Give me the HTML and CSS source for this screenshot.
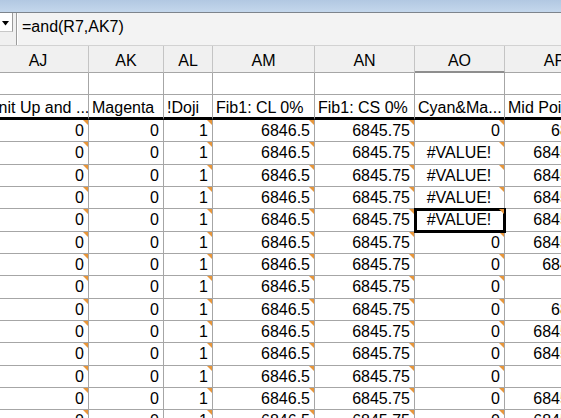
FILE: index.html
```html
<!DOCTYPE html>
<html lang="en">
<head>
    <meta charset="UTF-8">
    <title>Sheet</title>
    <link rel="stylesheet" href="styles.css">
</head>
<body>
    <div class="titlebar"></div>
    <div class="formula-bar">
        <div class="namebox">
            <svg width="8" height="5" viewBox="0 0 8 5"><path d="M0 0H7L3.5 4.5Z" fill="#000"/></svg>
        </div>
        <div class="formula">=and(R7,AK7)</div>
    </div>

    <div class="sheet">
        <div class="grid" id="grid">
            <div class="row head">
                <div class="cell">AJ</div>
                <div class="cell">AK</div>
                <div class="cell">AL</div>
                <div class="cell">AM</div>
                <div class="cell">AN</div>
                <div class="cell sel-col">AO</div>
                <div class="cell">AP</div>
            </div>
            <div class="row blank">
                <div class="cell"></div><div class="cell"></div><div class="cell"></div><div class="cell"></div>
                <div class="cell"></div><div class="cell"></div><div class="cell"></div>
            </div>
            <div class="row labels">
                <div class="cell first">Unit Up and ...</div>
                <div class="cell">Magenta</div>
                <div class="cell">!Doji</div>
                <div class="cell">Fib1: CL 0%</div>
                <div class="cell">Fib1: CS 0%</div>
                <div class="cell">Cyan&amp;Ma...</div>
                <div class="cell">Mid Point</div>
            </div>
        </div>
    </div>

    <script>
        const ao = ['0', '#VALUE!', '#VALUE!', '#VALUE!', '#VALUE!', '0', '0', '0', '0', '0', '0', '0', '0', '0'];
        const ap = ['6846.5', '6845.625', '6845.625', '6845.625', '6845.625', '6845.625', '6845.75', '',
                    '6846.5', '6845.625', '6845.625', '', '6845.625', '6845.625'];

        const grid = document.getElementById('grid');

        function cell(text, cls) {
            const c = document.createElement('div');
            c.className = 'cell ' + (cls || '');
            c.textContent = text;
            return c;
        }

        for (let i = 0; i < ao.length; i++) {
            const row = document.createElement('div');
            row.className = 'row data';
            row.appendChild(cell('0', 'tri'));
            row.appendChild(cell('0'));
            row.appendChild(cell('1', 'tri'));
            row.appendChild(cell('6846.5', 'tri'));
            row.appendChild(cell('6845.75', 'tri'));
            let cls = 'tri';
            if (ao[i].startsWith('#')) cls += ' err';
            if (i === 4) cls += ' sel';
            row.appendChild(cell(ao[i], cls));
            row.appendChild(cell(ap[i]));
            grid.appendChild(row);
        }
    </script>
</body>
</html>
```

FILE: styles.css
```css
* {
    box-sizing: border-box;
}
body {
    margin: 0;
    font-family: "Liberation Sans", Arial, sans-serif;
    font-size: 16px;
    color: #000;
    background-color: white;
    overflow: hidden;
}
.titlebar {
    height: 13px;
    background: linear-gradient(#b2c8e2, #c4d7ec);
    border-bottom: 1px solid #7d848c;
}
.formula-bar {
    display: flex;
    height: 33px;
    background-color: #f0f0f0;
    border-bottom: 1px solid #d2d2d2;
}
.namebox {
    width: 13px;
    height: 19px;
    background-color: white;
    border-right: 1px solid #9a9a9a;
    border-bottom: 1px solid #c8c8c8;
    display: flex;
    align-items: center;
    justify-content: center;
    padding-top: 2px;
}
.formula {
    flex: 1;
    margin-left: 3px;
    border-left: 1px solid #9c9c9c;
    box-shadow: inset 1px 0 #fff;
    background-color: #f3f3f3;
    padding-left: 5px;
    line-height: 27px;
}
.sheet {
    overflow: hidden;
}
.grid {
    margin-left: -12px;
    width: 617px;
}
.row {
    display: grid;
    grid-template-columns: 101px 75px 49px 102px 100px 90px 100px;
    height: 22.33px;
}
.cell {
    position: relative;
    border-right: 1px solid #a6a6a6;
    border-bottom: 1px solid #a6a6a6;
    padding: 0 4px 0 3px;
    line-height: 22px;
    white-space: nowrap;
    overflow: hidden;
    text-align: right;
}
.head {
    height: 27px;
}
.head .cell {
    background-color: #f0f0f0;
    border-right-color: #c4c4c4;
    text-align: center;
    padding: 2px 0 0 0;
    line-height: 26px;
}
.head .sel-col {
    border-bottom: 2px solid #8e8e8e;
}
.blank {
    height: 22px;
}
.labels {
    height: 25px;
}
.labels .cell {
    border-bottom: 3px solid #000;
    text-align: left;
    padding-top: 2px;
}
.labels .first {
    text-indent: -4px;
}
.err {
    text-align: center;
}
.tri::after {
    content: "";
    position: absolute;
    top: 0;
    right: 0;
    border-top: 5px solid #e8963a;
    border-left: 5px solid transparent;
}
.sel {
    outline: 3px solid #000;
    outline-offset: -2px;
    z-index: 1;
    overflow: visible;
}
```
